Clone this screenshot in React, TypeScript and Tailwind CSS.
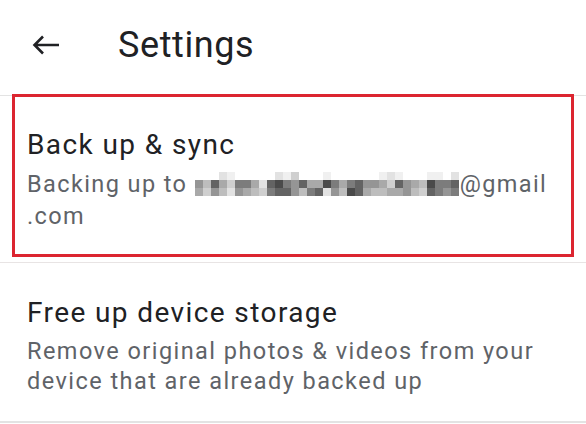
const font = { fontFamily: "Roboto, 'Noto Sans', Arial, sans-serif" };

// pixelated e-mail, 3 rows of 8px cells; each char is a shade
const mosaic = [
  "000210000021300010000001210001102",
  "648537752897685597578665386549778",
  "536426543788647826498544556438767",
];

const shades: Record<string, string> = {
  "0": "bg-white",
  "1": "bg-[#f0f0f0]",
  "2": "bg-[#e2e2e2]",
  "3": "bg-[#cfcfcf]",
  "4": "bg-[#bdbdbd]",
  "5": "bg-[#a9a9a9]",
  "6": "bg-[#959595]",
  "7": "bg-[#7c7c7c]",
  "8": "bg-[#636363]",
  "9": "bg-[#4a4a4a]",
};

function Mosaic() {
  return (
    <span className="inline-flex flex-col align-middle mr-[1px] -mt-[4px]">
      {mosaic.map((row, r) => (
        <span key={r} className="flex">
          {row.split("").map((c, i) => (
            <span key={i} className={`w-[8px] h-[8px] ${shades[c]}`} />
          ))}
        </span>
      ))}
    </span>
  );
}

export default function App() {
  return (
    <div className="w-[586px] h-[424px] bg-white overflow-hidden" style={font}>
      {/* top bar */}
      <div className="h-[95px] flex items-center">
        <div className="w-[118px] pl-[32px] pb-[6px]">
          <svg width="28" height="20" viewBox="0 0 28 20" fill="none">
            <path d="M27 10H3M11 1.5L2.5 10l8.5 8.5" stroke="#202124" strokeWidth="2.6" />
          </svg>
        </div>
        <h1 className="text-[36px] tracking-[0.6px] text-[#202124] pb-[6px]">Settings</h1>
      </div>

      <div className="border-t border-[#e3e3e3]">
        <div className="mx-[12px] -mt-[2px] border-[3px] border-[#dc2530] h-[163px] pl-[12px] pt-[30px]">
          <div className="text-[28px] tracking-[1.4px] leading-[36px] text-[#202124]">
            Back up &amp; sync
          </div>
          <div className="text-[23.5px] tracking-[1.4px] leading-[32px] text-[#5f6368] mt-[5px] whitespace-nowrap">
            Backing up to <Mosaic />@gmail
            <br />
            .com
          </div>
        </div>
      </div>

      <div className="mt-[5px] border-t border-[#e8e4e4] h-[159px] pl-[27px] pt-[32px]">
        <div className="text-[28px] tracking-[1.4px] leading-[36px] text-[#202124]">
          Free up device storage
        </div>
        <div className="text-[23.5px] tracking-[1.45px] leading-[30px] text-[#5f6368] mt-[5px]">
          Remove original photos &amp; videos from your
          <br />
          device that are already backed up
        </div>
      </div>
      <div className="border-t-2 border-[#e3e3e3]" />
    </div>
  );
}
